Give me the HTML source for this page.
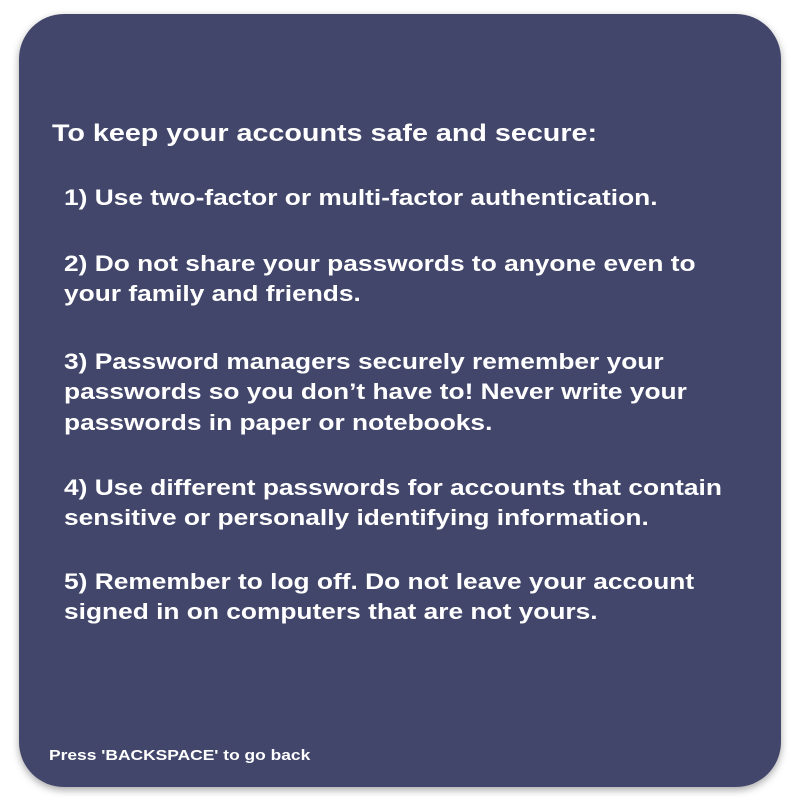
<!DOCTYPE html>
<html><head><style>
body{margin:0;width:800px;height:800px;background:#fff;position:relative;overflow:hidden;font-family:"Liberation Sans",sans-serif;font-weight:bold;color:#fff}
.card{position:absolute;left:19px;top:14px;width:762px;height:773px;background:#42466b;border-radius:45px;box-shadow:0 3px 8px rgba(0,0,0,.35)}
.t{position:absolute;white-space:nowrap;font-size:22px;line-height:30px;left:64px;transform:scaleX(1.196);transform-origin:0 50%}
</style></head><body>
<div class="card"></div>
<div class="t" style="left:52px;top:119px;font-size:24px">To keep your accounts safe and secure:</div>
<div class="t" style="top:183px">1) Use two-factor or multi-factor authentication.</div>
<div class="t" style="top:249px">2) Do not share your passwords to anyone even to</div>
<div class="t" style="top:279px">your family and friends.</div>
<div class="t" style="top:347px">3) Password managers securely remember your</div>
<div class="t" style="top:377px">passwords so you don’t have to! Never write your</div>
<div class="t" style="top:408px">passwords in paper or notebooks.</div>
<div class="t" style="top:473px">4) Use different passwords for accounts that contain</div>
<div class="t" style="top:503px">sensitive or personally identifying information.</div>
<div class="t" style="top:567px">5) Remember to log off. Do not leave your account</div>
<div class="t" style="top:597px">signed in on computers that are not yours.</div>
<div class="t" style="left:49px;top:746px;font-size:15px;line-height:20px;transform:scaleX(1.16)">Press 'BACKSPACE' to go back</div>
</body></html>
